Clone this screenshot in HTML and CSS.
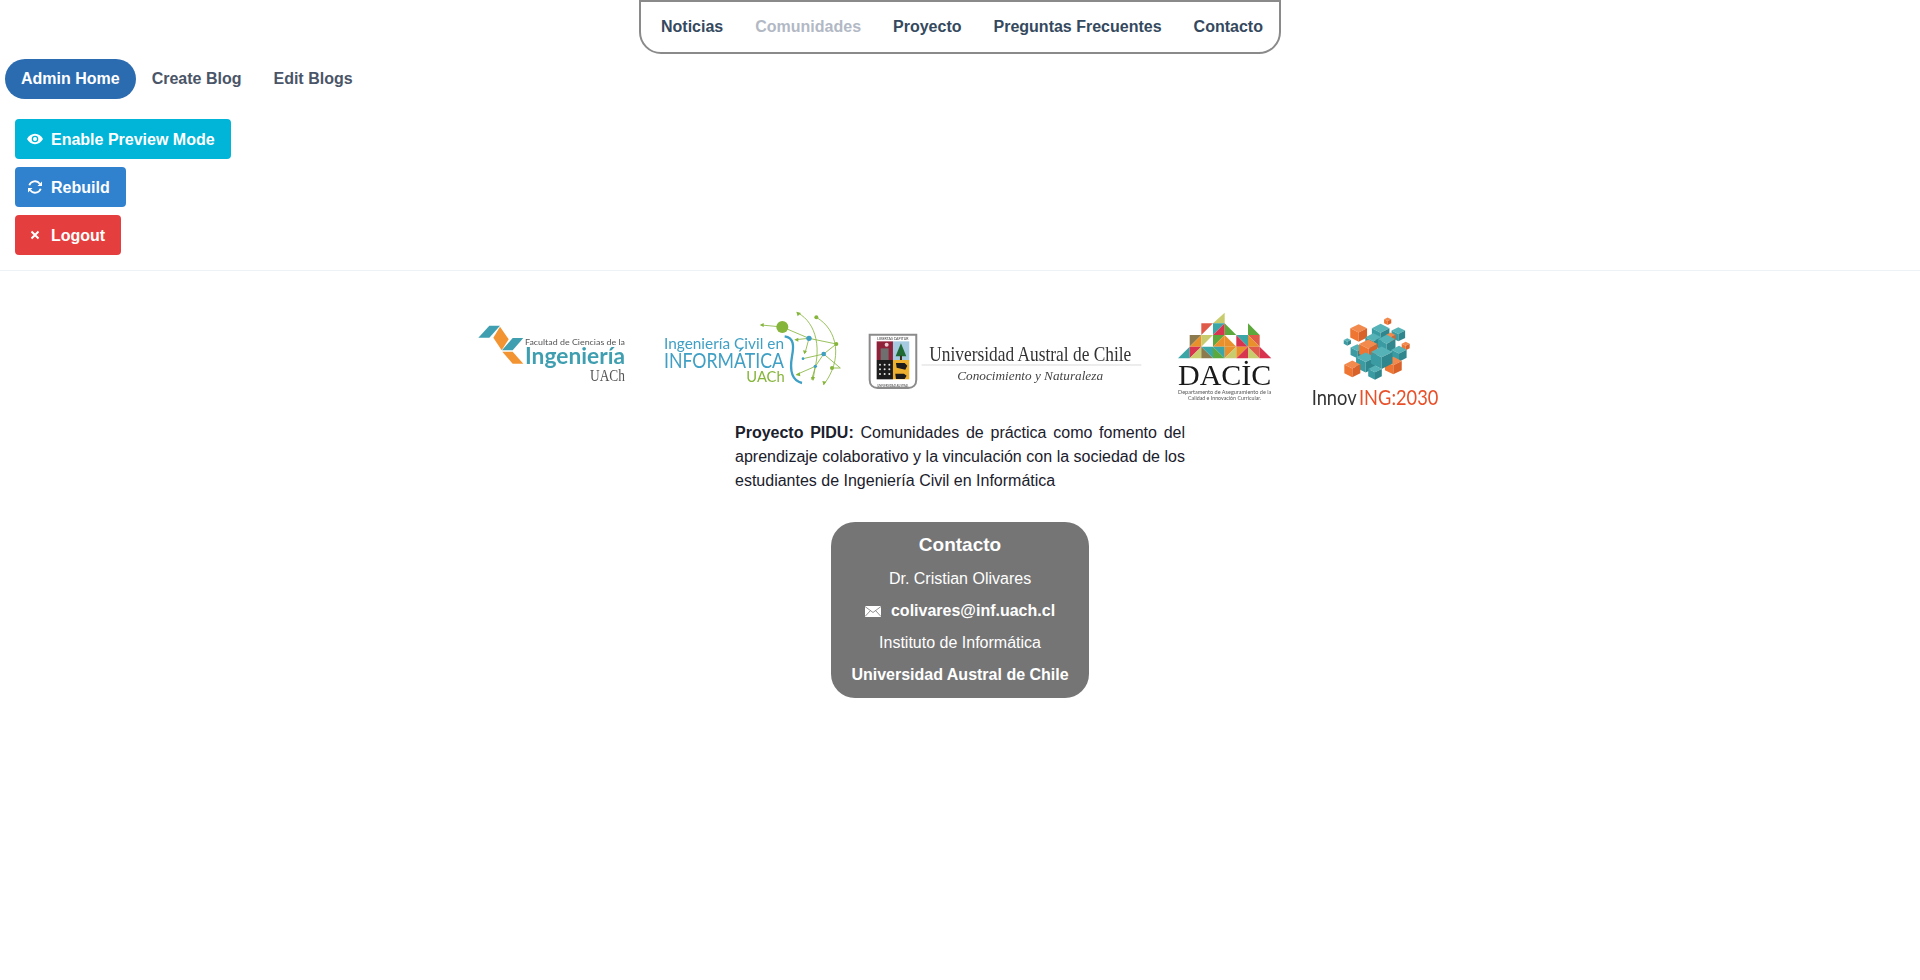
FILE: index.html
```html
<!DOCTYPE html>
<html lang="es">
  <head>
    <meta charset="UTF-8" />
    <meta name="viewport" content="width=device-width, initial-scale=1.0" />
    <title>Admin Home</title>
    <link rel="stylesheet" href="styles.css">
  </head>
  <body>
    <nav class="topnav">
      <a class="topnav-link" href="#">Noticias</a>
      <a class="topnav-link muted" href="#">Comunidades</a>
      <a class="topnav-link" href="#">Proyecto</a>
      <a class="topnav-link" href="#">Preguntas Frecuentes</a>
      <a class="topnav-link" href="#">Contacto</a>
    </nav>

    <div class="tabs">
      <a class="tab active" href="#">Admin Home</a>
      <a class="tab" href="#">Create Blog</a>
      <a class="tab" href="#">Edit Blogs</a>
    </div>

    <div class="actions">
      <button class="btn cyan">
        <svg class="btn-icon" viewBox="0 0 16 16"><path fill="#fff" fill-rule="evenodd" d="M8 2.800C4.600 2.800 1.600 5 0 8c1.600 3 4.600 5.200 8 5.200S14.400 11 16 8c-1.600-3-4.600-5.200-8-5.200zm0 8.500a3.300 3.300 0 1 1 0-6.600 3.300 3.300 0 0 1 0 6.600z"/><circle fill="#fff" cx="8" cy="8" r="2"/></svg>
        Enable Preview Mode
      </button>
      <button class="btn blue">
        <svg class="btn-icon" viewBox="0 0 16 16" fill="none" stroke="#fff" stroke-width="1.800"><path d="M2.300 6.300A6 6 0 0 1 12.800 4.700"/><path d="M13.700 9.700A6 6 0 0 1 3.200 11.300"/><path fill="#fff" stroke="none" d="M15 2.500v4.500h-4.500zM1 13.500V9h4.500z"/></svg>
        Rebuild
      </button>
      <button class="btn red">
        <svg class="btn-icon" viewBox="0 0 16 16" fill="none" stroke="#fff" stroke-width="2"><path d="M4.500 4.500l7 7M11.500 4.500l-7 7"/></svg>
        Logout
      </button>
    </div>

    <footer class="footer">
      <div class="logos">
        <!-- Facultad de Ciencias de la Ingenieria -->
        <svg class="logo logo-fac" viewBox="24 72 444 186">
          <polygon fill="#3f9fb0" points="25,113 58,77 90,77 58,113"/>
          <polygon fill="#f39432" points="70,113 90,80 116,118 95,151"/>
          <polygon fill="#3f9fb0" points="96,151 128,114 160,114 128,151"/>
          <polygon fill="#f39432" points="97,155 128,155 160,191 128,191"/>
          <text class="logo-text" x="165" y="135" font-size="25" fill="#555" textLength="300" lengthAdjust="spacingAndGlyphs">Facultad de Ciencias de la</text>
          <text class="logo-text bold" x="165" y="191" font-size="66" fill="#3f9fb0" textLength="300" lengthAdjust="spacingAndGlyphs">Ingeniería</text>
          <text class="logo-serif" x="360" y="243" font-size="53" fill="#555" textLength="105" lengthAdjust="spacingAndGlyphs">UACh</text>
        </svg>

        <!-- Ingenieria Civil en Informatica -->
        <svg class="logo logo-inf" viewBox="580 34 534 228">
          <text class="logo-text" x="583" y="147" font-size="46" fill="#3f9fc4" textLength="360" lengthAdjust="spacingAndGlyphs">Ingeniería Civil en</text>
          <text class="logo-text" x="583" y="206" font-size="64" fill="#3f9fc4" textLength="360" lengthAdjust="spacingAndGlyphs">INFORMÁTICA</text>
          <text class="logo-text" x="830" y="246" font-size="46" fill="#86b53c" textLength="115" lengthAdjust="spacingAndGlyphs">UACh</text>
          <path fill="none" stroke="#3f9fc4" stroke-width="7" d="M945 110c28 4 28 28 22 60-6 34-6 72 30 80"/>
          <g fill="none" stroke="#86b53c" stroke-width="2.500">
            <path d="M938 82L875 76M938 82L1018 116L1100 133M1018 116L978 120"/>
            <path d="M985 40C1040 70 1060 150 1025 240"/>
            <path d="M1040 53C1105 90 1120 180 1062 255"/>
            <path d="M1100 133L1062 163L1000 177M1062 163L1112 205L1087 205M1062 163L1037 200L980 225M1037 200L1030 240M1018 116L1006 160"/>
          </g>
          <g fill="#86b53c">
            <circle cx="938" cy="82" r="18"/>
            <circle cx="1040" cy="53" r="6"/>
            <circle cx="1100" cy="133" r="6"/>
            <circle cx="1087" cy="205" r="6"/>
            <polygon points="870,76 882,70 882,82"/>
            <polygon points="980,36 994,40 984,50"/>
            <polygon points="974,120 986,114 986,126"/>
            <polygon points="978,226 990,218 992,230"/>
            <polygon points="1062,257 1058,244 1070,246"/>
            <polygon points="1030,244 1024,232 1036,232"/>
            <polygon points="1004,164 1000,152 1012,154"/>
          </g>
          <g fill="#3f9fc4">
            <circle cx="1018" cy="116" r="8"/>
            <circle cx="1062" cy="163" r="7"/>
            <circle cx="1037" cy="200" r="5"/>
            <circle cx="1000" cy="177" r="4"/>
          </g>
        </svg>

        <!-- Universidad Austral de Chile -->
        <svg class="logo logo-uach" viewBox="24 100 826 171">
          <path fill="#fff" stroke="#8b8b8b" stroke-width="6" d="M29 105h140v135c0 16-10 25-24 25H53c-14 0-24-9-24-25z"/>
          <rect x="50" y="125" width="49" height="56" fill="#8f2138"/>
          <rect x="99" y="125" width="49" height="56" fill="#a6cbe0"/>
          <rect x="50" y="181" width="49" height="58" fill="#1c1c1c"/>
          <rect x="99" y="181" width="49" height="58" fill="#eeb12f"/>
          <rect x="62" y="146" width="24" height="35" fill="#6f6f6f"/>
          <circle cx="80" cy="135" r="6" fill="#e9cdd2"/>
          <polygon fill="#1f6b33" points="123,131 139,170 107,170"/>
          <rect x="120" y="168" width="6" height="13" fill="#3b2c1a"/>
          <g fill="#e6e6e6">
            <circle cx="60" cy="195" r="3"/><circle cx="74" cy="195" r="3"/><circle cx="88" cy="195" r="3"/>
            <circle cx="60" cy="209" r="3"/><circle cx="74" cy="209" r="3"/><circle cx="88" cy="209" r="3"/>
            <circle cx="60" cy="223" r="3"/><circle cx="74" cy="223" r="3"/><circle cx="88" cy="223" r="3"/>
          </g>
          <path fill="#1c1c1c" d="M108 190h26l8 8-6 12-26-6zM106 222h26l8 6-6 10h-26z"/>
          <text class="logo-text" x="52" y="120" font-size="10" fill="#333" textLength="94" lengthAdjust="spacingAndGlyphs">LIBERTAS CAPITUR</text>
          <text class="logo-text" x="52" y="261" font-size="9" fill="#333" textLength="94" lengthAdjust="spacingAndGlyphs">UNIVERSIDAD AUSTRAL</text>
          <text class="logo-serif" x="208" y="183" font-size="66" fill="#333" textLength="607" lengthAdjust="spacingAndGlyphs">Universidad Austral de Chile</text>
          <rect x="185" y="195" width="660" height="2" fill="#c8c8c8"/>
          <text class="logo-serif italic" x="292" y="241" font-size="38" fill="#444" textLength="438" lengthAdjust="spacingAndGlyphs">Conocimiento y Naturaleza</text>
        </svg>

        <!-- DACIC -->
        <svg class="logo logo-dacic" viewBox="52 36 288 270">
          <polygon fill="#c8cc6e" points="195,38 195,70 160,70"/>
          <polygon fill="#e05a4a" points="125,70 160,70 125,105"/>
          <polygon fill="#3aa6a6" points="160,70 195,70 160,105"/>
          <polygon fill="#d8344f" points="195,70 195,105 160,105"/>
          <polygon fill="#5da83c" points="195,70 230,105 195,105"/>
          <polygon fill="#5da83c" points="265,70 300,105 265,105"/>
          <polygon fill="#8c7a4f" points="90,105 125,105 90,140"/>
          <polygon fill="#e8912c" points="125,105 125,140 90,140"/>
          <polygon fill="#c8cc6e" points="125,105 160,105 125,140"/>
          <polygon fill="#5da83c" points="160,105 195,105 160,140"/>
          <polygon fill="#e8912c" points="195,105 195,140 160,140"/>
          <polygon fill="#e8912c" points="195,105 230,140 195,140"/>
          <polygon fill="#d8344f" points="230,105 265,140 230,140"/>
          <polygon fill="#3aa6a6" points="265,105 265,140 230,105"/>
          <polygon fill="#e05a4a" points="265,105 300,105 300,140"/>
          <polygon fill="#e8912c" points="265,105 300,140 265,140"/>
          <polygon fill="#3aa6a6" points="90,140 90,175 55,175"/>
          <polygon fill="#d8344f" points="90,140 125,140 90,175"/>
          <polygon fill="#c8cc6e" points="125,140 125,175 90,175"/>
          <polygon fill="#8c7a4f" points="125,140 160,175 125,175"/>
          <polygon fill="#3aa6a6" points="125,140 160,140 160,175"/>
          <polygon fill="#5da83c" points="160,140 195,175 160,175"/>
          <polygon fill="#3aa6a6" points="160,140 195,140 195,175"/>
          <polygon fill="#e8912c" points="195,140 230,140 195,175"/>
          <polygon fill="#c8cc6e" points="230,140 230,175 195,175"/>
          <polygon fill="#e8912c" points="230,140 265,140 230,175"/>
          <polygon fill="#d8344f" points="265,140 265,175 230,175"/>
          <polygon fill="#c8cc6e" points="265,140 300,175 265,175"/>
          <polygon fill="#e05a4a" points="265,140 300,140 300,175"/>
          <polygon fill="#d8344f" points="300,140 335,175 300,175"/>
          <text class="logo-serif" x="55" y="255" font-size="90" fill="#1a1a1a" textLength="280" lengthAdjust="spacingAndGlyphs">DACİC</text>
          <text class="logo-text" x="55" y="283" font-size="15" fill="#555" textLength="280" lengthAdjust="spacingAndGlyphs">Departamento de Aseguramiento de la</text>
          <text class="logo-text" x="85" y="300" font-size="15" fill="#555" textLength="220" lengthAdjust="spacingAndGlyphs">Calidad e Innovación Curricular.</text>
        </svg>

        <!-- InnovING:2030 -->
        <svg class="logo logo-innov" viewBox="450 44 390 272">
          <defs>
            <g id="cube-teal">
              <polygon fill="#55b3b8" points="0,-20 24,-8 0,4 -24,-8"/>
              <polygon fill="#3a9ba3" points="-24,-8 0,4 0,30 -24,18"/>
              <polygon fill="#2f868d" points="24,-8 0,4 0,30 24,18"/>
            </g>
            <g id="cube-orange">
              <polygon fill="#f28a4e" points="0,-20 24,-8 0,4 -24,-8"/>
              <polygon fill="#ee7632" points="-24,-8 0,4 0,30 -24,18"/>
              <polygon fill="#d9622a" points="24,-8 0,4 0,30 24,18"/>
            </g>
          </defs>
          <use href="#cube-orange" transform="translate(683 60) scale(.45)"/>
          <use href="#cube-teal" transform="translate(715 97) scale(.85)"/>
          <use href="#cube-teal" transform="translate(662 92) scale(1.100)"/>
          <use href="#cube-orange" transform="translate(596 92) scale(1.050)"/>
          <use href="#cube-orange" transform="translate(692 108) scale(.6)"/>
          <use href="#cube-teal" transform="translate(562 122) scale(.45)"/>
          <use href="#cube-teal" transform="translate(640 118) scale(1)"/>
          <use href="#cube-teal" transform="translate(680 125) scale(1.100)"/>
          <use href="#cube-orange" transform="translate(737 134) scale(.5)"/>
          <use href="#cube-teal" transform="translate(592 148) scale(.85)"/>
          <use href="#cube-orange" transform="translate(625 140) scale(1.150)"/>
          <use href="#cube-teal" transform="translate(717 155) scale(.95)"/>
          <use href="#cube-teal" transform="translate(617 180) scale(1.200)"/>
          <use href="#cube-orange" transform="translate(700 190) scale(1.050)"/>
          <use href="#cube-teal" transform="translate(665 165) scale(1.350)"/>
          <use href="#cube-orange" transform="translate(577 200) scale(1)"/>
          <use href="#cube-teal" transform="translate(645 212) scale(.85)"/>
          <text class="logo-text" x="455" y="312" font-size="66" fill="#333" textLength="135" lengthAdjust="spacingAndGlyphs">Innov</text>
          <text class="logo-text" x="597" y="312" font-size="66" fill="#e8502a" textLength="238" lengthAdjust="spacingAndGlyphs">ING:2030</text>
        </svg>
      </div>

      <p class="project"><strong>Proyecto PIDU:</strong> Comunidades de práctica como fomento del aprendizaje colaborativo y la vinculación con la sociedad de los estudiantes de Ingeniería Civil en Informática</p>

      <div class="contact">
        <h2 class="contact-title">Contacto</h2>
        <p class="contact-line">Dr. Cristian Olivares</p>
        <p class="contact-line">
          <svg class="mail-icon" viewBox="0 0 16 11"><rect width="16" height="11" fill="#fff"/><path fill="none" stroke="#757575" stroke-width=".8" d="M0 .5l8 6 8-6M0 10.500l5.500-6M16 10.500l-5.500-6"/></svg>
          <strong>colivares@inf.uach.cl</strong>
        </p>
        <p class="contact-line">Instituto de Informática</p>
        <p class="contact-line"><strong>Universidad Austral de Chile</strong></p>
      </div>
    </footer>
  </body>
</html>
```

FILE: styles.css
```css
body {
  font-family: "Liberation Sans", Arial, sans-serif;
  font-size: 16px;
  line-height: 24px;
  margin: 0;
  padding: 0;
  color: #1a202c;
  background-color: #fff;
}

.topnav {
  display: flex;
  width: 642px;
  height: 54px;
  box-sizing: border-box;
  margin: 0 auto 5px;
  padding: 0 0 0 4px;
  border: 2px solid #8a8a8a;
  border-radius: 0 0 22px 22px;
}

.topnav-link {
  padding: 0 16px;
  line-height: 50px;
  font-weight: bold;
  white-space: nowrap;
  color: #34495e;
  text-decoration: none;
}

.topnav-link.muted {
  color: #b2b9c5;
}

.tabs {
  display: flex;
  margin-left: 5px;
}

.tab {
  padding: 8px 16px;
  border-radius: 20px;
  font-weight: bold;
  color: #4a5568;
  text-decoration: none;
}

.tab.active {
  background-color: #2b6cb0;
  color: #fff;
}

.actions {
  display: flex;
  flex-direction: column;
  align-items: flex-start;
  gap: 8px;
  margin-top: 20px;
  padding-left: 15px;
}

.btn {
  display: flex;
  align-items: center;
  gap: 8px;
  height: 40px;
  padding: 1px 16px 0 12px;
  border: 0;
  border-radius: 4px;
  font-family: inherit;
  font-size: 16px;
  line-height: 24px;
  font-weight: bold;
  color: #fff;
}

.btn-icon {
  width: 16px;
  height: 16px;
  margin-top: -1px;
}

.cyan {
  background-color: #00b5d8;
}

.blue {
  background-color: #3182ce;
}

.red {
  background-color: #e53e3e;
}

.footer {
  display: flex;
  flex-direction: column;
  align-items: center;
  margin-top: 15px;
  border-top: 1px solid #edf2f7;
}

.logos {
  display: flex;
  align-items: flex-start;
  height: 92px;
  margin-top: 40px;
  padding-right: 2px;
}

.logo {
  display: block;
  overflow: visible;
  filter: blur(0.4px);
}

.logo-fac {
  width: 148px;
  height: 62px;
  margin-top: 13px;
}

.logo-inf {
  width: 178px;
  height: 76px;
  margin-left: 37px;
}

.logo-uach {
  width: 275px;
  height: 57px;
  margin-left: 27px;
  margin-top: 22px;
}

.logo-dacic {
  width: 96px;
  height: 90px;
  margin-left: 34px;
  margin-top: 1px;
}

.logo-innov {
  width: 130px;
  height: 91px;
  margin-left: 37px;
  margin-top: 4px;
}

.logo-text {
  font-family: Lato, "Liberation Sans", sans-serif;
}

.logo-text.bold {
  font-weight: bold;
}

.logo-serif {
  font-family: "Liberation Serif", "Times New Roman", serif;
}

.logo-serif.italic {
  font-style: italic;
}

.project {
  width: 450px;
  margin: 18px 0 0;
  text-align: justify;
}

.contact {
  width: 258px;
  height: 176px;
  box-sizing: border-box;
  margin-top: 29px;
  padding: 9px 0 0;
  border-radius: 24px;
  background-color: #757575;
  color: #fff;
  text-align: center;
}

.contact-title {
  margin: 0 0 8px;
  font-size: 19px;
  line-height: 28px;
}

.contact-line {
  margin: 0 0 8px;
}

.mail-icon {
  width: 16px;
  height: 11px;
  margin-right: 5.600px;
  vertical-align: -1px;
}
```
